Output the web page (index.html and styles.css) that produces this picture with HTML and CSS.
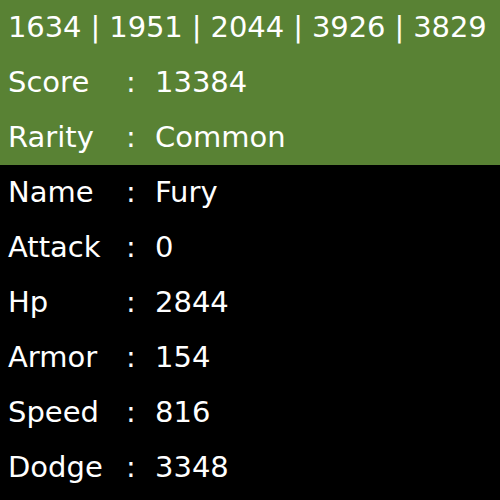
FILE: index.html
```html
<!DOCTYPE html>
<html>
<head>
<meta charset="utf-8">
<link rel="stylesheet" href="styles.css">
</head>
<body>
<div class="card">
  <div class="top">
    <div class="row ids">1634 | 1951 | 2044 | 3926 | 3829</div>
    <div class="row"><span class="k">Score</span><span class="c">:</span><span class="v">13384</span></div>
    <div class="row"><span class="k">Rarity</span><span class="c">:</span><span class="v">Common</span></div>
  </div>
  <div class="bottom">
    <div class="row"><span class="k">Name</span><span class="c">:</span><span class="v">Fury</span></div>
    <div class="row"><span class="k">Attack</span><span class="c">:</span><span class="v">0</span></div>
    <div class="row"><span class="k">Hp</span><span class="c">:</span><span class="v">2844</span></div>
    <div class="row"><span class="k">Armor</span><span class="c">:</span><span class="v">154</span></div>
    <div class="row"><span class="k">Speed</span><span class="c">:</span><span class="v">816</span></div>
    <div class="row"><span class="k">Dodge</span><span class="c">:</span><span class="v">3348</span></div>
  </div>
</div>
</body>
</html>
```
FILE: styles.css
```css
html, body {
  margin: 0;
  padding: 0;
  background: #000;
}
.card {
  width: 500px;
  height: 500px;
  overflow: hidden;
  font-family: "DejaVu Sans", sans-serif;
  font-size: 29px;
  color: #fff;
}
.top {
  background: #598234;
}
.bottom {
  background: #000;
}
.row {
  height: 55px;
  line-height: 55px;
  padding-left: 8px;
  display: flex;
  white-space: nowrap;
}
.ids {
  letter-spacing: -0.1px;
}
.k {
  width: 118px;
}
.c {
  width: 29px;
}
```
